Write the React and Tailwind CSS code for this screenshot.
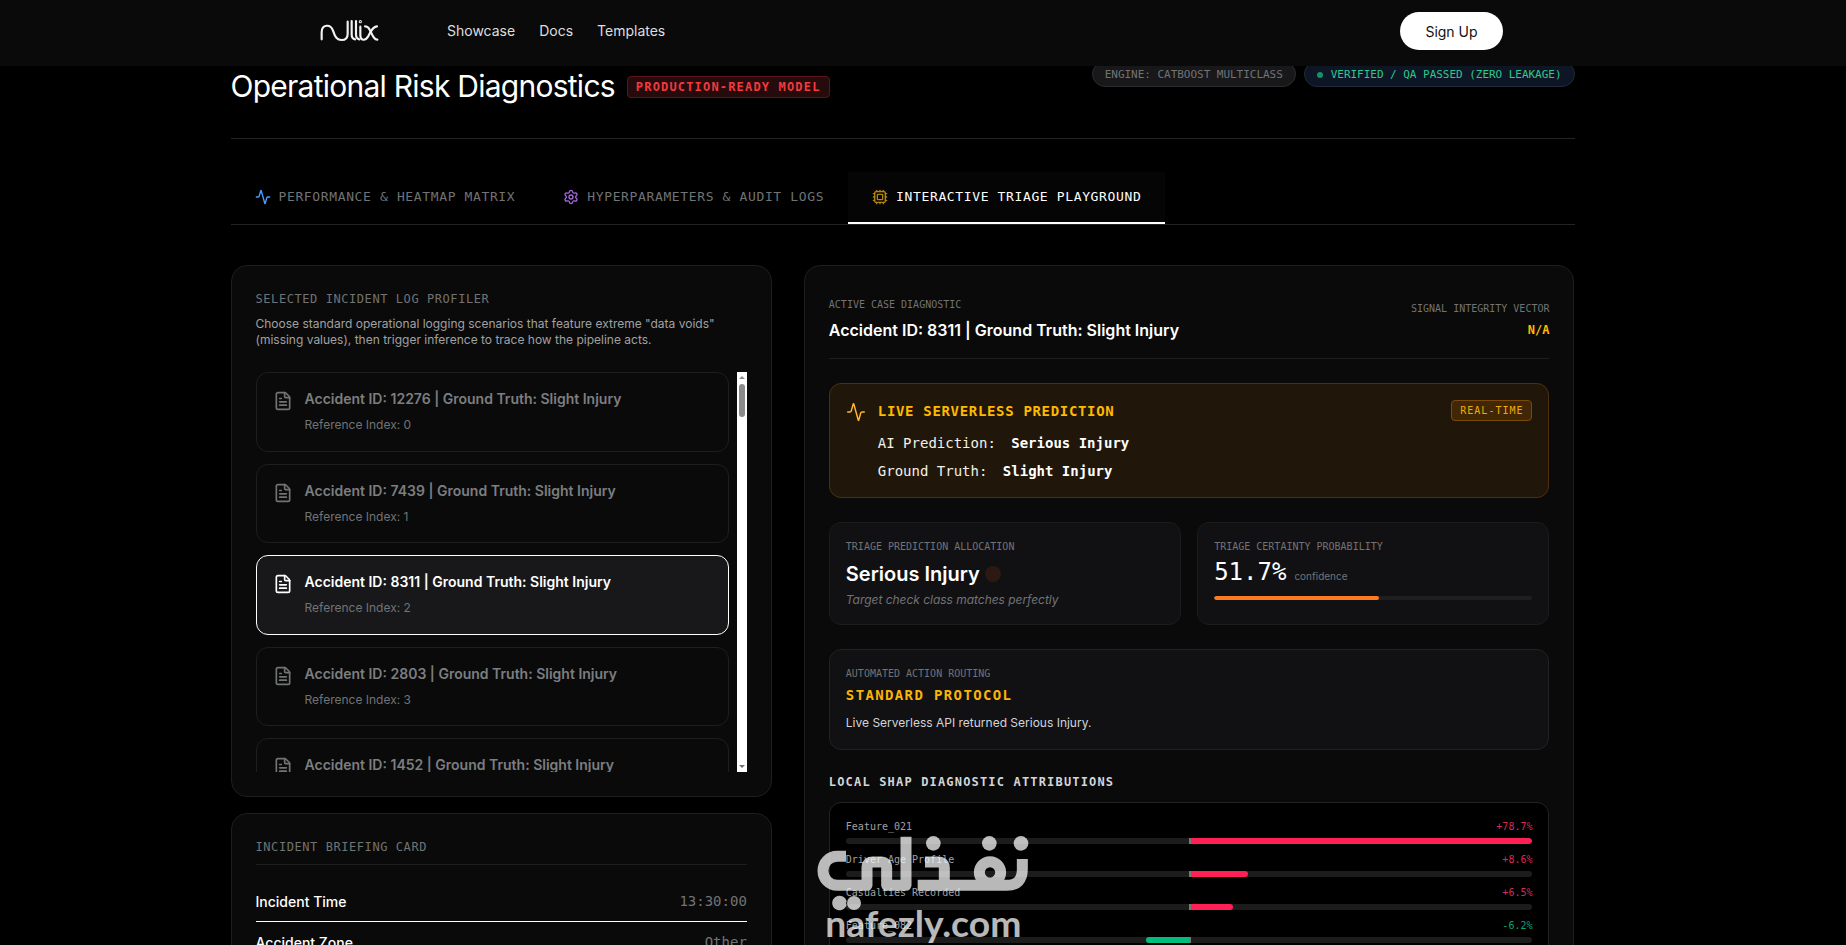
import React, { useState } from 'react';
import { Activity, Cpu, FileText, Settings } from 'lucide-react';

const MONO = "font-['DejaVu_Sans_Mono','Liberation_Mono',monospace]";

const tabs = [
  { id: 'performance', label: 'Performance & Heatmap Matrix', icon: Activity, color: 'text-[#4a9eff]' },
  { id: 'audit', label: 'Hyperparameters & Audit Logs', icon: Settings, color: 'text-[#a368e0]' },
  { id: 'triage', label: 'Interactive Triage Playground', icon: Cpu, color: 'text-[#b5850c]' },
];

const incidents = [
  { id: 12276, truth: 'Slight Injury' },
  { id: 7439, truth: 'Slight Injury' },
  { id: 8311, truth: 'Slight Injury' },
  { id: 2803, truth: 'Slight Injury' },
  { id: 1452, truth: 'Slight Injury' },
];

const briefing = [
  { label: 'Incident Time', value: '13:30:00' },
  { label: 'Accident Zone', value: 'Other' },
];

const attributions = [
  { name: 'Feature_021', value: 78.7, width: 50 },
  { name: 'Driver Age Profile', value: 8.6, width: 8.4 },
  { name: 'Casualties Recorded', value: 6.5, width: 6.2 },
  { name: 'Feature_082', value: -6.2, width: 6.3 },
];

const App = () => {
  const [activeTab, setActiveTab] = useState('triage');
  const [selected, setSelected] = useState(2);

  return (
    <div className="h-[945px] overflow-hidden bg-black text-white font-['Inter',sans-serif] relative">
      <Navbar />

      <main className="ml-[230.5px] w-[1344px]">
        {/* Page header */}
        <header className="h-[73px] flex items-start justify-between border-b border-[#232425]">
          <div className="flex items-center gap-3 pt-[2px]">
            <h1 className="text-[30px] leading-9 tracking-[-0.75px]">Operational Risk Diagnostics</h1>
            <span className={`${MONO} mt-[2px] px-2 py-0.5 rounded border border-[#5e1519] bg-[#260b0c] text-[12px] leading-4 font-bold tracking-[1.17px] uppercase text-[#f23a3e]`}>
              Production-Ready Model
            </span>
          </div>
          <div className={`${MONO} flex gap-2 text-[11px] leading-4 tracking-[-0.03px] -mt-[5px]`}>
            <span className="h-[26px] px-3 pt-[5px] rounded-full border border-[#2c2c2d] bg-[#18181a] text-[#717375]">
              ENGINE: CATBOOST MULTICLASS
            </span>
            <span className="h-[26px] px-3 pt-[2px] rounded-full border border-[#1f2b3b] bg-[#0e1525] text-[#2fc98d] flex items-center gap-2">
              <i className="w-1.5 h-1.5 rounded-full bg-[#15906b]" />
              VERIFIED / QA PASSED (ZERO LEAKAGE)
            </span>
          </div>
        </header>

        {/* Tabs */}
        <nav className="mt-[33px] flex border-b border-[#232425]">
          {tabs.map(({ id, label, icon: Icon, color }) => (
            <button
              key={id}
              onClick={() => setActiveTab(id)}
              className={`${MONO} h-[52px] px-6 flex items-center gap-2 border-b-2 text-[13px] tracking-[0.63px] uppercase ${
                activeTab === id ? 'border-white bg-[#050505] text-white font-medium' : 'border-transparent text-[#717375]'
              }`}
            >
              <Icon size={16} className={color} />
              {label}
            </button>
          ))}
        </nav>

        <div className="mt-10 grid grid-cols-12 gap-8 items-start">
          <div className="col-span-5 flex flex-col gap-4">
            {/* Incident list */}
            <section className="h-[532px] p-6 rounded-2xl border border-[#1e1e1f] bg-[#0a0a0a]">
              <h3 className={`${MONO} text-[12px] leading-[18px] tracking-[0.57px] uppercase text-[#717375]`}>
                Selected Incident Log Profiler
              </h3>
              <p className="mt-2 text-[12px] leading-4 text-[#a0a1a3]">
                Choose standard operational logging scenarios that feature extreme "data voids"
                <br />
                (missing values), then trigger inference to trace how the pipeline acts.
              </p>
              <div className="mt-6 h-[400px] flex gap-2 overflow-hidden">
                <div className="flex-1 flex flex-col gap-3">
                  {incidents.map((item, index) => (
                    <IncidentRow
                      key={item.id}
                      item={item}
                      index={index}
                      active={selected === index}
                      onSelect={() => setSelected(index)}
                    />
                  ))}
                </div>
                <Scrollbar />
              </div>
            </section>

            {/* Briefing */}
            <section className="px-6 pt-6 pb-10 rounded-2xl border border-[#1e1e1f] bg-[#0a0a0a]">
              <h3 className={`${MONO} pb-2 border-b border-[#1e1e1f] text-[12px] leading-[18px] tracking-[0.57px] uppercase text-[#717375]`}>
                Incident Briefing Card
              </h3>
              <div className="mt-4">
                {briefing.map((row) => (
                  <div key={row.label} className="h-[41px] flex items-center justify-between border-b border-white text-[14px]">
                    <span className="font-medium">{row.label}</span>
                    <span className={`${MONO} text-[#717375]`}>{row.value}</span>
                  </div>
                ))}
              </div>
            </section>
          </div>

          <section className="col-span-7 h-[760px] p-6 rounded-2xl border border-[#1e1e1f] bg-[#0a0a0a]">
            <div className="h-[69px] flex justify-between border-b border-[#1e1e1f]">
              <div className="pt-[7px]">
                <Label>Active Case Diagnostic</Label>
                <h2 className="mt-[6px] text-[16px] leading-6 font-semibold">
                  Accident ID: 8311 | Ground Truth: Slight Injury
                </h2>
              </div>
              <div className="pt-[11px] text-right">
                <Label>Signal Integrity Vector</Label>
                <p className={`${MONO} mt-[6px] text-[12px] leading-4 font-bold text-[#ffb900]`}>N/A</p>
              </div>
            </div>

            {/* Live prediction */}
            <div className="mt-6 h-[115px] p-4 flex items-start gap-3 rounded-xl border border-[#4c300e] bg-[#20170a]">
              <Activity size={20} className="mt-[2px] text-[#ffb62e]" strokeWidth={1.75} />
              <div className={`${MONO} flex-1 pt-px text-[14px] leading-5 text-[#f4f0e6]`}>
                <p className="font-bold tracking-[0.67px] text-[#ffb900]">LIVE SERVERLESS PREDICTION</p>
                <p className="mt-3">
                  AI Prediction: <b className="ml-[7px] font-extrabold text-white">Serious Injury</b>
                </p>
                <p className="mt-2">
                  Ground Truth: <b className="ml-[7px] font-extrabold text-white">Slight Injury</b>
                </p>
              </div>
              <span className={`${MONO} px-2 py-[2px] rounded border border-[#7b4a06] bg-[#422706] text-[10px] leading-[15px] tracking-widest text-[#efac05]`}>
                REAL-TIME
              </span>
            </div>

            <div className="mt-6 grid grid-cols-2 gap-4">
              <div className="h-[103px] px-4 pt-4 rounded-xl border border-[#1c1c1e] bg-[#111113]">
                <Label>Triage Prediction Allocation</Label>
                <div className="mt-[6px] flex items-center gap-[5px]">
                  <span className="text-[20px] leading-7 font-semibold">Serious Injury</span>
                  <i className="w-4 h-4 rounded-full bg-[#2b1912]" />
                </div>
                <p className="mt-1 text-[12px] leading-4 italic text-[#717375] tracking-[-0.03px]">
                  Target check class matches perfectly
                </p>
              </div>
              <div className="h-[103px] px-4 pt-4 rounded-xl border border-[#1c1c1e] bg-[#111113]">
                <Label>Triage Certainty Probability</Label>
                <div className="mt-[2px] flex items-baseline gap-2">
                  <span className={`${MONO} text-[24px] leading-8`}>51.7%</span>
                  <span className="text-[10px] leading-4 text-[#717375]">confidence</span>
                </div>
                <div className="mt-[8px] h-1 rounded-full bg-[#1f1f21] overflow-hidden">
                  <div className="h-full rounded-full bg-[#fd7a1e]" style={{ width: '51.7%' }} />
                </div>
              </div>
            </div>

            <div className="mt-6 h-[101px] px-4 pt-4 rounded-xl border border-[#222225] bg-[#111113]">
              <Label>Automated Action Routing</Label>
              <p className={`${MONO} mt-[4px] text-[14px] leading-5 font-bold tracking-[1.37px] text-[#fbb408]`}>STANDARD PROTOCOL</p>
              <p className="mt-[8px] text-[12px] leading-5 text-[#d4d4d8]">Live Serverless API returned Serious Injury.</p>
            </div>

            {/* Feature attributions */}
            <h3 className={`${MONO} mt-6 text-[12px] leading-4 font-bold tracking-[1.17px] text-[#d4d4d8]`}>
              LOCAL SHAP DIAGNOSTIC ATTRIBUTIONS
            </h3>
            <div className="mt-3 p-4 flex flex-col gap-[8px] rounded-xl border border-[#222225] bg-black">
              {attributions.map((item) => (
                <AttributionRow key={item.name} item={item} />
              ))}
            </div>
          </section>
        </div>
      </main>

      <Watermark />
    </div>
  );
};

const Navbar = () => (
  <div className="relative z-10 h-[66px] bg-[#0a0a0a] pl-[320px] pr-[343px] pb-[4px] flex items-center text-[14px]">
    <BrandLogo />
    <div className="ml-[67px] -mt-[2px] flex gap-6 text-[#dedede]">
      <a>Showcase</a>
      <a>Docs</a>
      <a>Templates</a>
    </div>
    <button className="ml-auto h-[38px] w-[103px] rounded-full bg-white text-[#111]">Sign Up</button>
  </div>
);

const Label = ({ children }) => (
  <p className={`${MONO} text-[10px] leading-[15px] uppercase text-[#717375]`}>{children}</p>
);

const IncidentRow = ({ item, index, active, onSelect }) => (
  <button
    onClick={onSelect}
    className={`h-[79.6px] shrink-0 p-4 flex items-start gap-3 text-left rounded-xl border ${
      active ? 'border-white bg-[#18181a]' : 'border-[#1e1e1f]'
    }`}
  >
    <FileText size={20} className={`mt-0.5 ${active ? 'text-white' : 'text-[#717375]'}`} />
    <div>
      <p className={`text-[14px] leading-5 font-semibold ${active ? 'text-white' : 'text-[#7c7e80]'}`}>
        Accident ID: {item.id} | Ground Truth: {item.truth}
      </p>
      <p className="mt-[6px] text-[12px] leading-5 text-[#717375]">Reference Index: {index}</p>
    </div>
  </button>
);

const Scrollbar = () => (
  <div className="w-[10px] h-full bg-white flex flex-col items-center">
    <svg width="6" height="3" viewBox="0 0 6 3" className="mt-1 fill-[#8b8b8b]">
      <path d="M0 3L3 0L6 3Z" />
    </svg>
    <div className="mt-[5px] h-[33px] w-[6px] rounded-full bg-[#8b8b8b]" />
    <svg width="6" height="3" viewBox="0 0 6 3" className="mt-auto mb-1 fill-[#6f6f6f]">
      <path d="M0 0L3 3L6 0Z" />
    </svg>
  </div>
);

const AttributionRow = ({ item }) => {
  const positive = item.value > 0;
  return (
    <div className={`${MONO} text-[10px] leading-[15px]`}>
      <div className="flex justify-between">
        <span className="text-[#a0a1a3]">{item.name}</span>
        <span className={positive ? 'text-[#d82a55]' : 'text-[#09a672]'}>
          {positive ? '+' : ''}{item.value}%
        </span>
      </div>
      <div className="mt-[4px] h-[6px] flex rounded-full bg-[#1c1c1d] overflow-hidden">
        <div className="w-[343px] flex justify-end">
          {!positive && <div className="h-full rounded-l-full bg-[#00bc7d]" style={{ width: `${item.width * 2}%` }} />}
        </div>
        <div className="w-[2px] bg-[#77777a]" />
        <div className="flex-1">
          {positive && <div className="h-full rounded-r-full bg-[#ff2056]" style={{ width: `${item.width * 2}%` }} />}
        </div>
      </div>
    </div>
  );
};

const BrandLogo = () => (
  <svg width="60" height="24" viewBox="0 0 180 72" fill="none" stroke="#f2f2f2" strokeWidth="6.5" strokeLinecap="round" aria-label="nullix">
    <path d="M5 61V40C5 15 32 14 39 35C46 57 52 63 65 63C77 63 83 55 83 44V8" />
    <path d="M95 6V46Q95 60 105 61" />
    <path d="M108 6V46Q108 60 118 61" />
    <path d="M121 23V48C121 66 136 66 144 53L151 40C157 29 162 23 171 22" />
    <path d="M135 22C144 22 147 28 153 40C160 55 164 62 172 62" />
    <circle cx="121" cy="8" r="1.5" />
  </svg>
);

const Watermark = () => (
  <svg width="230" height="115" viewBox="0 0 690 345" className="absolute left-[810px] top-[830px] opacity-[0.72]">
    <g fill="none" stroke="#fff" strokeWidth="33">
      <path d="M108 79H82C57 79 39 98 39 122S57 166 82 166H171V113Q171 96 188 96H213Q230 96 230 113V166H288V20" strokeLinejoin="round" />
      <path d="M345 96H384Q403 96 403 114V166M323 166H590Q637 166 637 118V87" />
      <circle cx="540" cy="127" r="32" />
    </g>
    <g fill="#fff">
      <circle cx="370" cy="40" r="22" />
      <circle cx="538" cy="40" r="22" />
      <circle cx="633" cy="40" r="22" />
      <path d="M110 214A22 22 0 1 0 110 224Q106 219 110 214Z" />
      <circle cx="132" cy="219" r="21" />
      <text x="46" y="320" textLength="588" lengthAdjust="spacingAndGlyphs" fontFamily="Lato, sans-serif" fontWeight="700" fontSize="109">
        nafezly.com
      </text>
    </g>
  </svg>
);

export default App;
